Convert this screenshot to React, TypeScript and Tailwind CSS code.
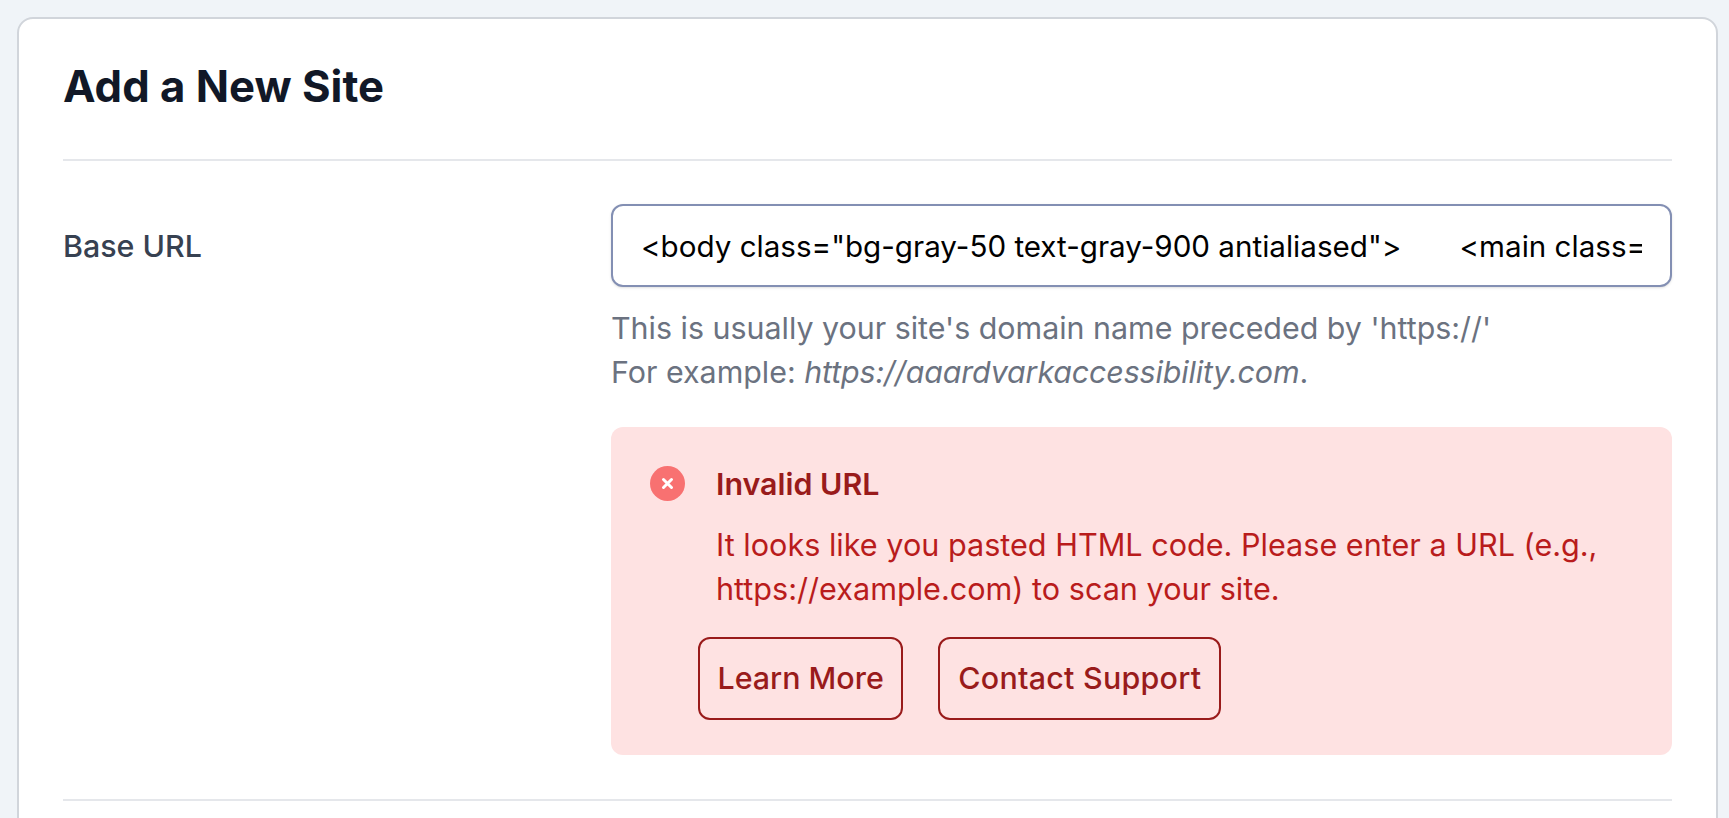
import React from "react";

const inputValue = '<body class="bg-gray-50 text-gray-900 antialiased">       <main class="mx-auto max-w-3xl px-4 py-8">';

const App: React.FC = () => {
  return (
    <div className="h-[818px] overflow-hidden bg-[#f0f4f8] pl-[17px] pr-[11px] pt-[17px] font-['Inter',sans-serif]">
      <div className="h-[900px] rounded-[16px] border-2 border-[#d1d5db] bg-white px-[44px]">
        {/* Header */}
        <div className="flex h-[142px] items-center border-b-2 border-[#e5e7eb] pb-[4px]">
          <h1 className="text-[43.7px] leading-[56px] font-bold text-[#111827]">Add a New Site</h1>
        </div>

        {/* Base URL row */}
        <div className="flex border-b-2 border-[#e5e7eb] pt-[43px] pb-[44px]">
          <label className="w-[548px] shrink-0 pt-[20px] text-[30.4px] leading-[44px] font-[450] text-[#374151]">
            Base URL
          </label>
          <div className="min-w-0 flex-1">
            <input
              readOnly
              value={inputValue}
              className="h-[83px] w-full rounded-[12px] border-2 border-[#838fb3] bg-white px-[28px] text-[29.6px] text-black shadow-sm outline-none"
            />
            <p className="mt-[19px] text-[30.4px] leading-[44px] text-[#6b7280]">
              This is usually your site's domain name preceded by 'https://'
              <br />
              For example: <em className="tracking-[-0.13px]">https://aaardvarkaccessibility.com</em>.
            </p>

            {/* Error alert */}
            <div className="mt-[33px] flex rounded-[12px] bg-[#fee2e2] pt-[35px] pr-[40px] pb-[35px] pl-[39px]">
              <svg className="mt-[4px] h-[35px] w-[35px] shrink-0" viewBox="0 0 35 35">
                <circle cx="17.5" cy="17.5" r="17.5" fill="#f87171" />
                <path d="M13.5 13.5l8 8M21.5 13.5l-8 8" stroke="#fff" strokeWidth="3" strokeLinecap="round" />
              </svg>
              <div className="ml-[31px] min-w-0 flex-1">
                <h3 className="text-[30.4px] leading-[44px] font-semibold text-[#991b1b]">Invalid URL</h3>
                <p className="mt-[17px] text-[30.6px] leading-[44px] text-[#b91c1c]">
                  It looks like you pasted HTML code. Please enter a URL (e.g., https://example.com) to scan your site.
                </p>
                <div className="mt-[26px] -ml-[18px] flex gap-[35px]">
                  <button className="h-[83px] rounded-[12px] border-2 border-[#991b1b] px-[17.5px] pt-px text-[30.4px] font-[450] text-[#991b1b]">
                    Learn More
                  </button>
                  <button className="h-[83px] rounded-[12px] border-2 border-[#991b1b] px-[18px] pt-px text-[30.4px] font-[450] tracking-[0.27px] text-[#991b1b]">
                    Contact Support
                  </button>
                </div>
              </div>
            </div>
          </div>
        </div>
      </div>
    </div>
  );
};

export default App;
